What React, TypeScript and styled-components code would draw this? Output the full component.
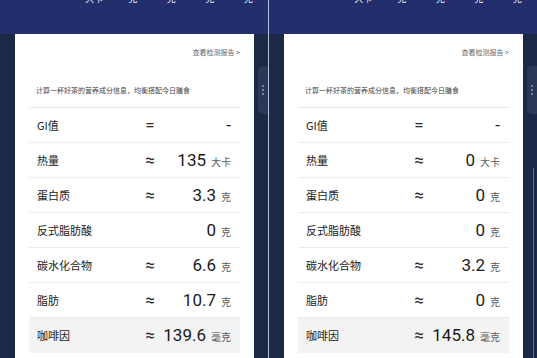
import React from 'react'
import styled, { createGlobalStyle } from 'styled-components'

const GlobalStyle = createGlobalStyle`
  html, body {
    margin: 0;
    padding: 0;
    background: #1b2846;
    overflow: hidden;
  }
`

const cjk = `"Noto Sans CJK SC", "Noto Sans", sans-serif`
const latin = `Roboto, "Liberation Sans", "Noto Sans CJK SC", sans-serif`

const Screen = styled.div`
  display: flex;
  width: 537px;
  height: 358px;
  overflow: hidden;
`

const Split = styled.div`
  width: 1px;
  background: #b8c1d6;
`

const Panel = styled.div`
  position: relative;
  display: flex;
  flex-direction: column;
  width: 268px;
  background: #1b2846;
  overflow: hidden;
`

const TopBand = styled.div`
  height: 34px;
  flex-shrink: 0;
  background: #222f6c;
  overflow: hidden;
`

const PrevUnits = styled.div`
  display: grid;
  grid-template-columns: repeat(5, 38.5px);
  padding-left: 75px;
  margin-top: -7px;
  font: 9px/12px ${cjk};
  color: #e8ecf8;
  text-align: center;
`

const Card = styled.div`
  flex: 1;
  margin: 0 14px 0 15px;
  padding: 0 14px;
  background: #fff;
`

const ReportLink = styled.div`
  padding-top: 13px;
  text-align: right;
  font: 7px/10px ${cjk};
  color: #666;
`

const Intro = styled.div`
  margin-top: 28px;
  padding-left: 7px;
  font: 7px/10px ${cjk};
  color: #444;
`

const Table = styled.div`
  margin-top: 12px;
  border-top: 1px solid #e7e7e7;
`

const Row = styled.div<{ $shade?: boolean }>`
  display: grid;
  grid-template-columns: 111px 20px 1fr;
  align-items: center;
  height: 34px;
  border-bottom: 1px solid ${(p) => (p.$shade ? '#f3f3f3' : '#ececec')};
  background: ${(p) => (p.$shade ? '#f3f3f3' : 'transparent')};
`

const Label = styled.div`
  padding-left: 8px;
  font: 11px/14px ${cjk};
  color: #222;
`

const Op = styled.div`
  text-align: center;
  font: 17px/18px ${latin};
  color: #2a2a2a;
`

const Value = styled.div`
  display: flex;
  justify-content: flex-end;
  align-items: baseline;
  gap: 5px;
  padding-right: 9px;
  white-space: nowrap;
`

const Num = styled.span`
  font: 17px/20px ${latin};
  color: #1a1a1a;
`

const Unit = styled.span`
  font: 10px/12px ${cjk};
  color: #5a5a5a;
`

const Handle = styled.div`
  position: absolute;
  right: 0;
  top: 66px;
  width: 10px;
  height: 48px;
  border-radius: 5px 0 0 5px;
  background: #2b3958;
  display: flex;
  flex-direction: column;
  align-items: center;
  justify-content: center;
  gap: 2.5px;
`

const Dot = styled.span`
  width: 1.5px;
  height: 1.5px;
  border-radius: 50%;
  background: #8492b2;
`

const ScrollTrack = styled.div`
  position: absolute;
  right: 3px;
  top: 168px;
  bottom: 0;
  width: 1px;
  background: #5d6c90;
`

type Item = {
  label: string
  op?: string
  num: string
  unit?: string
}

const rows = (v: string[]): Item[] => [
  { label: 'GI值', op: '=', num: '-' },
  { label: '热量', op: '≈', num: v[0], unit: '大卡' },
  { label: '蛋白质', op: '≈', num: v[1], unit: '克' },
  { label: '反式脂肪酸', num: v[2], unit: '克' },
  { label: '碳水化合物', op: '≈', num: v[3], unit: '克' },
  { label: '脂肪', op: '≈', num: v[4], unit: '克' },
  { label: '咖啡因', op: '≈', num: v[5], unit: '毫克' },
]

const NutritionPanel: React.FC<{ values: string[]; scroll?: boolean }> = ({ values, scroll }) => {
  const items = rows(values)
  return (
    <Panel>
      <TopBand>
        <PrevUnits>
          <span>大卡</span>
          <span>克</span>
          <span>克</span>
          <span>克</span>
          <span>克</span>
        </PrevUnits>
      </TopBand>
      <Card>
        <ReportLink>查看检测报告 &gt;</ReportLink>
        <Intro>计算一杯好茶的营养成分信息，均衡搭配今日膳食</Intro>
        <Table>
          {items.map((it, i) => (
            <Row key={it.label} $shade={i === items.length - 1}>
              <Label>{it.label}</Label>
              <Op>{it.op}</Op>
              <Value>
                <Num>{it.num}</Num>
                {it.unit && <Unit>{it.unit}</Unit>}
              </Value>
            </Row>
          ))}
        </Table>
      </Card>
      <Handle>
        <Dot />
        <Dot />
        <Dot />
      </Handle>
      {scroll && <ScrollTrack />}
    </Panel>
  )
}

const App: React.FC = () => {
  return (
    <>
      <GlobalStyle />
      <Screen>
        <NutritionPanel values={['135', '3.3', '0', '6.6', '10.7', '139.6']} />
        <Split />
        <NutritionPanel values={['0', '0', '0', '3.2', '0', '145.8']} scroll />
      </Screen>
    </>
  )
}

export default App
